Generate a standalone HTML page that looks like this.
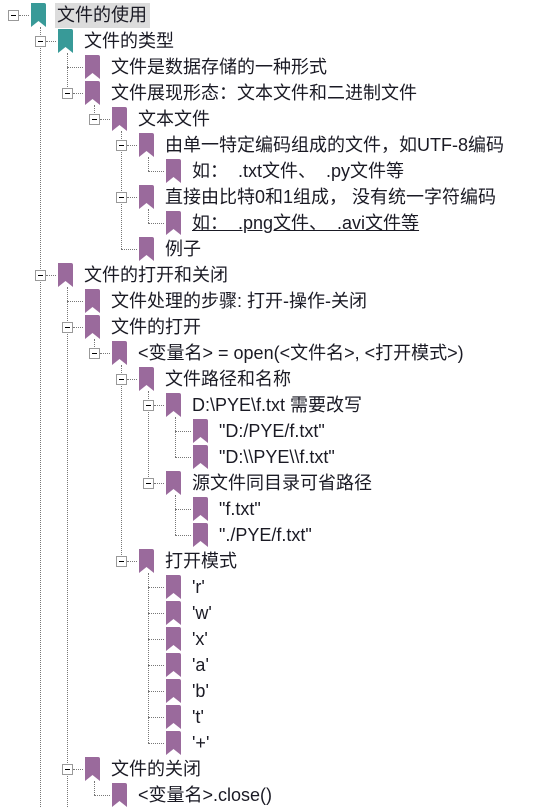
<!DOCTYPE html>
<html><head><meta charset="utf-8">
<style>
html,body{margin:0;padding:0;background:#fff;width:558px;height:807px;overflow:hidden;position:relative}
.t{position:absolute;font-family:"Liberation Sans","Noto Sans CJK SC",sans-serif;font-size:18px;color:#1a1a24;white-space:pre;line-height:22px}
.b{position:absolute;width:9px;height:9px;border:1px solid #999;background:#fff}
.b:after{content:"";position:absolute;left:2px;top:4px;width:5px;height:1px;background:#000}
.v{position:absolute;width:0;border-left:1px dotted #777}
.h{position:absolute;height:0;border-top:1px dotted #777}
svg{position:absolute}
</style></head><body>
<div style="position:absolute;left:55px;top:3px;width:95px;height:25px;background:#dcdcdc"></div>
<script>
var rows=[
[0,"文件的使用",1,1],[1,"文件的类型",1,1],[2,"文件是数据存储的一种形式",0],[2,"文件展现形态：文本文件和二进制文件",1],
[3,"文本文件",1],[4,"由单一特定编码组成的文件，如UTF-8编码",1],[5,"如：  .txt文件、  .py文件等",0],
[4,"直接由比特0和1组成， 没有统一字符编码",1],[5,"如：  .png文件、  .avi文件等",0,0,1],[4,"例子",0],
[1,"文件的打开和关闭",1],[2,"文件处理的步骤: 打开-操作-关闭",0],[2,"文件的打开",1],
[3,"<变量名> = open(<文件名>, <打开模式>)",1],[4,"文件路径和名称",1],[5,"D:\\PYE\\f.txt 需要改写",1],
[6,"\"D:/PYE/f.txt\"",0],[6,"\"D:\\\\PYE\\\\f.txt\"",0],[5,"源文件同目录可省路径",1],[6,"\"f.txt\"",0],[6,"\"./PYE/f.txt\"",0],
[4,"打开模式",1],[5,"'r'",0],[5,"'w'",0],[5,"'x'",0],[5,"'a'",0],[5,"'b'",0],[5,"'t'",0],[5,"'+'",0],
[2,"文件的关闭",1],[3,"<变量名>.close()",0]];
(function(){
var out="";
function cx(l){return 13+27*l;}
for(var i=0;i<rows.length;i++){
 var r=rows[i],L=r[0],rt=2+26*i,c=15+26*i;
 var last=-1,j;
 for(j=i+1;j<rows.length;j++){if(rows[j][0]<=L)break;if(rows[j][0]==L+1)last=j;}
 if(last>=0){
   var end=15+26*last; if(j>=rows.length && L<=1) end=807;
   out+='<div class="v" style="left:'+cx(L+1)+'px;top:'+(rt+25)+'px;height:'+(end-rt-25)+'px"></div>';
 }
 if(r[2]){out+='<div class="b" style="left:'+(cx(L)-5)+'px;top:'+(c-5)+'px"></div>';
   out+='<div class="h" style="left:'+(cx(L)+6)+'px;top:'+c+'px;width:'+(30+27*L-cx(L)-7)+'px"></div>';}
 else if(L>0) out+='<div class="h" style="left:'+cx(L)+'px;top:'+c+'px;width:'+(30+27*L-cx(L)-1)+'px"></div>';
 var col=r[3]?"#389a98":"#9a6a9c";
 out+='<svg width="15" height="24" style="left:'+(31+27*L)+'px;top:'+(rt+1)+'px"><path d="M0 0H13Q15 0 15 2V24L7.5 18L0 24Z" fill="'+col+'"/></svg>';
 var txt=r[1].replace(/&/g,"&amp;").replace(/</g,"&lt;").replace(/>/g,"&gt;");
 out+='<div class="t" style="left:'+(57+27*L)+'px;top:'+(c-11)+'px;'+(r[4]?'text-decoration:underline':'')+'">'+txt+'</div>';
}
document.write(out);
})();
</script>
</body></html>
